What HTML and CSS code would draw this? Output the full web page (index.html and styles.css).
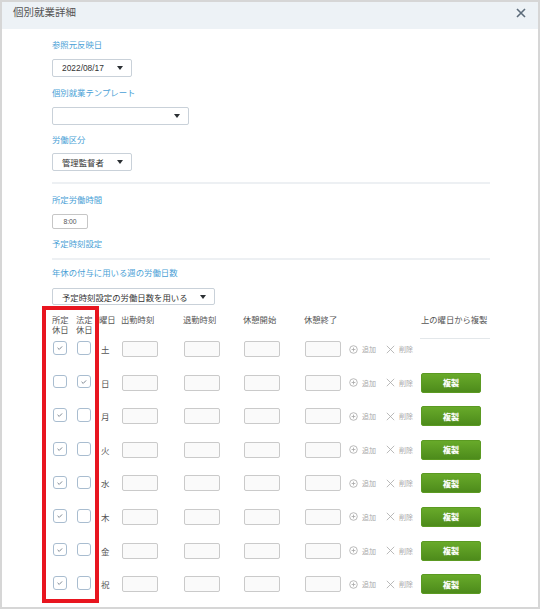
FILE: index.html
```html
<!DOCTYPE html>
<html lang="ja">
<head>
<meta charset="utf-8">
<link rel="stylesheet" href="styles.css">
</head>
<body>
<div class="frame">
  <div class="header">
    <div class="title">個別就業詳細</div>
    <svg class="close" width="10" height="10" viewBox="0 0 10 10"><path d="M1 1L9 9M9 1L1 9" stroke="#5c6b7a" stroke-width="1.6" fill="none"/></svg>
  </div>
  <div class="content">
    <div class="label mt9">参照元反映日</div>
    <div class="select w80 mt9"><span>2022/08/17</span><i class="caret"></i></div>
    <div class="label mt9">個別就業テンプレート</div>
    <div class="select w137 mt9"><span></span><i class="caret"></i></div>
    <div class="label mt8">労働区分</div>
    <div class="select w80 mt8"><span>管理監督者</span><i class="caret"></i></div>
    <div class="sep mt11"></div>
    <div class="label mt9">所定労働時間</div>
    <div class="timebox mt9">8:00</div>
    <div class="label mt8">予定時刻設定</div>
    <div class="sep mt9"></div>
    <div class="label mt6">年休の付与に用いる週の労働日数</div>
    <div class="select w163 h17 mt10"><span>予定時刻設定の労働日数を用いる</span><i class="caret"></i></div>

    <div class="table">
      <div class="thead">
        <div class="th"><div>所定</div><div>休日</div></div>
        <div class="th"><div>法定</div><div>休日</div></div>
        <div class="th th-day">曜日</div>
        <div class="th">出勤時刻</div>
        <div class="th">退勤時刻</div>
        <div class="th">休憩開始</div>
        <div class="th">休憩終了</div>
        <div class="th"></div>
        <div class="th"></div>
        <div class="th th-copy">上の曜日から複製</div>
      </div>
      <div class="tbody">
        <div class="tr">
          <div class="cell"><span class="cb on"><svg viewBox="0 0 13 13"><path d="M4 6.6L5.9 8.4L9.2 5" /></svg></span></div>
          <div class="cell"><span class="cb"></span></div>
          <div class="cell day">土</div>
          <div class="cell"><span class="tin"></span></div>
          <div class="cell"><span class="tin"></span></div>
          <div class="cell"><span class="tin"></span></div>
          <div class="cell"><span class="tin"></span></div>
          <div class="cell act"><svg class="ico" viewBox="0 0 9 9"><circle cx="4.5" cy="4.5" r="3.8"/><path d="M4.5 2.6V6.4M2.6 4.5H6.4"/></svg><span>追加</span></div>
          <div class="cell act"><svg class="ico" viewBox="0 0 9 9"><path d="M0.8 0.8L8.2 8.2M8.2 0.8L0.8 8.2"/></svg><span>削除</span></div>
          <div class="cell"></div>
        </div>
        <div class="tr">
          <div class="cell"><span class="cb"></span></div>
          <div class="cell"><span class="cb on"><svg viewBox="0 0 13 13"><path d="M4 6.6L5.9 8.4L9.2 5" /></svg></span></div>
          <div class="cell day">日</div>
          <div class="cell"><span class="tin"></span></div>
          <div class="cell"><span class="tin"></span></div>
          <div class="cell"><span class="tin"></span></div>
          <div class="cell"><span class="tin"></span></div>
          <div class="cell act"><svg class="ico" viewBox="0 0 9 9"><circle cx="4.5" cy="4.5" r="3.8"/><path d="M4.5 2.6V6.4M2.6 4.5H6.4"/></svg><span>追加</span></div>
          <div class="cell act"><svg class="ico" viewBox="0 0 9 9"><path d="M0.8 0.8L8.2 8.2M8.2 0.8L0.8 8.2"/></svg><span>削除</span></div>
          <div class="cell"><span class="btn">複製</span></div>
        </div>
        <div class="tr">
          <div class="cell"><span class="cb on"><svg viewBox="0 0 13 13"><path d="M4 6.6L5.9 8.4L9.2 5" /></svg></span></div>
          <div class="cell"><span class="cb"></span></div>
          <div class="cell day">月</div>
          <div class="cell"><span class="tin"></span></div>
          <div class="cell"><span class="tin"></span></div>
          <div class="cell"><span class="tin"></span></div>
          <div class="cell"><span class="tin"></span></div>
          <div class="cell act"><svg class="ico" viewBox="0 0 9 9"><circle cx="4.5" cy="4.5" r="3.8"/><path d="M4.5 2.6V6.4M2.6 4.5H6.4"/></svg><span>追加</span></div>
          <div class="cell act"><svg class="ico" viewBox="0 0 9 9"><path d="M0.8 0.8L8.2 8.2M8.2 0.8L0.8 8.2"/></svg><span>削除</span></div>
          <div class="cell"><span class="btn">複製</span></div>
        </div>
        <div class="tr">
          <div class="cell"><span class="cb on"><svg viewBox="0 0 13 13"><path d="M4 6.6L5.9 8.4L9.2 5" /></svg></span></div>
          <div class="cell"><span class="cb"></span></div>
          <div class="cell day">火</div>
          <div class="cell"><span class="tin"></span></div>
          <div class="cell"><span class="tin"></span></div>
          <div class="cell"><span class="tin"></span></div>
          <div class="cell"><span class="tin"></span></div>
          <div class="cell act"><svg class="ico" viewBox="0 0 9 9"><circle cx="4.5" cy="4.5" r="3.8"/><path d="M4.5 2.6V6.4M2.6 4.5H6.4"/></svg><span>追加</span></div>
          <div class="cell act"><svg class="ico" viewBox="0 0 9 9"><path d="M0.8 0.8L8.2 8.2M8.2 0.8L0.8 8.2"/></svg><span>削除</span></div>
          <div class="cell"><span class="btn">複製</span></div>
        </div>
        <div class="tr">
          <div class="cell"><span class="cb on"><svg viewBox="0 0 13 13"><path d="M4 6.6L5.9 8.4L9.2 5" /></svg></span></div>
          <div class="cell"><span class="cb"></span></div>
          <div class="cell day">水</div>
          <div class="cell"><span class="tin"></span></div>
          <div class="cell"><span class="tin"></span></div>
          <div class="cell"><span class="tin"></span></div>
          <div class="cell"><span class="tin"></span></div>
          <div class="cell act"><svg class="ico" viewBox="0 0 9 9"><circle cx="4.5" cy="4.5" r="3.8"/><path d="M4.5 2.6V6.4M2.6 4.5H6.4"/></svg><span>追加</span></div>
          <div class="cell act"><svg class="ico" viewBox="0 0 9 9"><path d="M0.8 0.8L8.2 8.2M8.2 0.8L0.8 8.2"/></svg><span>削除</span></div>
          <div class="cell"><span class="btn">複製</span></div>
        </div>
        <div class="tr">
          <div class="cell"><span class="cb on"><svg viewBox="0 0 13 13"><path d="M4 6.6L5.9 8.4L9.2 5" /></svg></span></div>
          <div class="cell"><span class="cb"></span></div>
          <div class="cell day">木</div>
          <div class="cell"><span class="tin"></span></div>
          <div class="cell"><span class="tin"></span></div>
          <div class="cell"><span class="tin"></span></div>
          <div class="cell"><span class="tin"></span></div>
          <div class="cell act"><svg class="ico" viewBox="0 0 9 9"><circle cx="4.5" cy="4.5" r="3.8"/><path d="M4.5 2.6V6.4M2.6 4.5H6.4"/></svg><span>追加</span></div>
          <div class="cell act"><svg class="ico" viewBox="0 0 9 9"><path d="M0.8 0.8L8.2 8.2M8.2 0.8L0.8 8.2"/></svg><span>削除</span></div>
          <div class="cell"><span class="btn">複製</span></div>
        </div>
        <div class="tr">
          <div class="cell"><span class="cb on"><svg viewBox="0 0 13 13"><path d="M4 6.6L5.9 8.4L9.2 5" /></svg></span></div>
          <div class="cell"><span class="cb"></span></div>
          <div class="cell day">金</div>
          <div class="cell"><span class="tin"></span></div>
          <div class="cell"><span class="tin"></span></div>
          <div class="cell"><span class="tin"></span></div>
          <div class="cell"><span class="tin"></span></div>
          <div class="cell act"><svg class="ico" viewBox="0 0 9 9"><circle cx="4.5" cy="4.5" r="3.8"/><path d="M4.5 2.6V6.4M2.6 4.5H6.4"/></svg><span>追加</span></div>
          <div class="cell act"><svg class="ico" viewBox="0 0 9 9"><path d="M0.8 0.8L8.2 8.2M8.2 0.8L0.8 8.2"/></svg><span>削除</span></div>
          <div class="cell"><span class="btn">複製</span></div>
        </div>
        <div class="tr">
          <div class="cell"><span class="cb on"><svg viewBox="0 0 13 13"><path d="M4 6.6L5.9 8.4L9.2 5" /></svg></span></div>
          <div class="cell"><span class="cb"></span></div>
          <div class="cell day">祝</div>
          <div class="cell"><span class="tin"></span></div>
          <div class="cell"><span class="tin"></span></div>
          <div class="cell"><span class="tin"></span></div>
          <div class="cell"><span class="tin"></span></div>
          <div class="cell act"><svg class="ico" viewBox="0 0 9 9"><circle cx="4.5" cy="4.5" r="3.8"/><path d="M4.5 2.6V6.4M2.6 4.5H6.4"/></svg><span>追加</span></div>
          <div class="cell act"><svg class="ico" viewBox="0 0 9 9"><path d="M0.8 0.8L8.2 8.2M8.2 0.8L0.8 8.2"/></svg><span>削除</span></div>
          <div class="cell"><span class="btn">複製</span></div>
        </div>
      </div>
    </div>
  </div>
  <div class="highlight"></div>
</div>
</body>
</html>
```

FILE: styles.css
```css
* { box-sizing: border-box; }
html, body { margin: 0; padding: 0; background: #fff; }
body {
  font-family: "Liberation Sans", "Noto Sans CJK JP", sans-serif;
  color: #444;
}
.frame {
  position: relative;
  width: 540px;
  height: 609px;
  border: 2px solid #d6d6d6;
  overflow: hidden;
  background: #fff;
}
.header {
  height: 27px;
  background: #edf2f6;
  display: flex;
  justify-content: space-between;
  align-items: flex-start;
  padding: 3px 12px 0 11px;
}
.title {
  font-family: "Noto Sans CJK JP", sans-serif;
  font-size: 10.5px;
  line-height: 13px;
  color: #555;
}
.close { margin-top: 3px; }

.content {
  display: flex;
  flex-direction: column;
  align-items: flex-start;
  padding-left: 50px;
  width: 488px;
}
.label {
  font-family: "Noto Sans CJK JP", sans-serif;
  font-size: 8.4px;
  line-height: 12px;
  height: 12px;
  color: #4a9fd6;
}
.mt6 { margin-top: 6px; }
.mt8 { margin-top: 8px; }
.mt9 { margin-top: 9px; }
.mt10 { margin-top: 10px; }
.mt11 { margin-top: 11px; }

.select {
  height: 18px;
  border: 1px solid #c9d1d9;
  border-radius: 2px;
  background: #fff;
  display: flex;
  align-items: center;
  justify-content: space-between;
  padding: 0 8px 0 9px;
  font-size: 8.4px;
  color: #333;
}
.select span { font-family: "Liberation Sans", "Noto Sans CJK JP", sans-serif; }
.w80 { width: 80px; }
.w137 { width: 137px; }
.w163 { width: 163px; }
.h17 { height: 17px; }
.caret {
  width: 0; height: 0;
  border-left: 3.5px solid transparent;
  border-right: 3.5px solid transparent;
  border-top: 4px solid #2b2f33;
}
.sep {
  width: 438px;
  height: 2px;
  background: #edf0f3;
}
.timebox {
  width: 36px;
  height: 15px;
  border: 1px solid #c6c6c6;
  border-radius: 2px;
  font-size: 6.8px;
  line-height: 13px;
  text-align: center;
  color: #555;
}

.table { margin-top: 10px; width: 438px; }
.thead, .tr {
  display: grid;
  grid-template-columns: 24px 24px 21px 62px 60px 61px 45px 37px 34px 70px;
}
.thead { height: 24px; }
.th {
  font-family: "Liberation Sans", "Noto Sans CJK JP", sans-serif;
  font-size: 8.3px;
  line-height: 10px;
  color: #555;
  white-space: nowrap;
}
.th > div { height: 10px; line-height: 10px; }
.th-day { margin-left: -1px; }
.th-copy {
  border-bottom: 1px solid #e3e7ea;
  height: 24px;
  padding-left: 1px;
}
.tbody { padding-top: 2px; }
.tr { height: 33.6px; align-items: start; }
.cell {
  height: 16px;
  display: flex;
  align-items: center;
}
.cb {
  width: 13.5px;
  height: 13.5px;
  margin-top: -2px;
  margin-left: 1px;
  border: 1px solid #a9bdd0;
  border-radius: 3px;
  background: #fff;
  display: block;
}
.cb svg { display: block; width: 11.5px; height: 11.5px; }
.cb svg path { fill: none; stroke: #6f7985; stroke-width: 1; }
.day {
  font-family: "Noto Sans CJK JP", sans-serif;
  font-size: 8.5px;
  color: #555;
  padding-left: 1px;
}
.tin {
  width: 36px;
  height: 16px;
  border: 1px solid #cacaca;
  border-radius: 2px;
  background: #fafafa;
  display: block;
  margin-left: 1px;
}
.act {
  font-family: "Noto Sans CJK JP", sans-serif;
  font-size: 7px;
  color: #a9a9a9;
  gap: 4px;
}
.ico { width: 9px; height: 9px; flex: none; }
.ico circle, .ico path { fill: none; stroke: #a8a8a8; stroke-width: 0.8; }
.btn {
  width: 60px;
  height: 20px;
  margin-left: 1px;
  border: 1px solid #5b9a22;
  border-radius: 2px;
  background: linear-gradient(#68aa2a, #4d8b1b);
  color: #fff;
  font-family: "Noto Sans CJK JP", sans-serif;
  font-weight: bold;
  font-size: 8px;
  display: flex;
  align-items: center;
  justify-content: center;
  text-shadow: 0 0 1px rgba(255,255,255,0.6);
}
.highlight {
  position: absolute;
  left: 40px;
  top: 304px;
  width: 57px;
  height: 297px;
  border: 4px solid #e8151f;
}
```
